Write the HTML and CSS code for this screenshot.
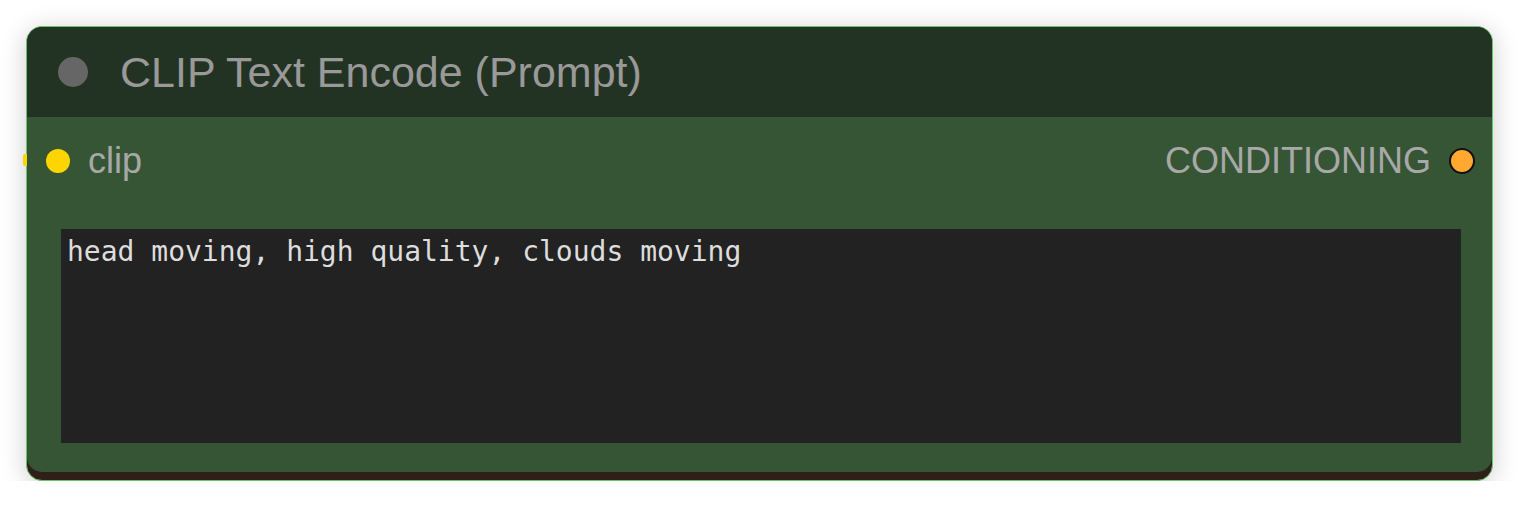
FILE: index.html
```html
<!DOCTYPE html>
<html>
<head>
<meta charset="utf-8">
<link rel="stylesheet" href="styles.css">
</head>
<body>
<div class="stage">
  <div class="node">
    <span class="link-stub"></span>
    <div class="node-inner">
      <div class="title-bar">
        <span class="title-dot"></span>
        <span class="title-text">CLIP Text Encode (Prompt)</span>
      </div>
      <div class="node-body">
        <div class="slot-row">
          <div class="slot slot-in">
            <span class="slot-dot dot-clip"></span>
            <span class="slot-label">clip</span>
          </div>
          <div class="slot slot-out">
            <span class="slot-label">CONDITIONING</span>
            <span class="slot-dot dot-cond"></span>
          </div>
        </div>
        <textarea class="prompt" spellcheck="false">head moving, high quality, clouds moving</textarea>
      </div>
    </div>
  </div>
</div>
</body>
</html>
```
FILE: styles.css
```css
* { box-sizing: border-box; }
html, body { margin: 0; padding: 0; background: #ffffff; }
.stage { padding: 26px 0 0 26px; }
.node {
  position: relative;
  width: 1467px;
  height: 455px;
  border: 1px solid #66c46a;
  border-radius: 16px;
  background: #2e2019;
  box-shadow: 0 4px 26px rgba(0,0,0,0.2);
}
.link-stub {
  position: absolute;
  left: -4px;
  top: 127px;
  width: 4px;
  height: 12px;
  border-radius: 2px 0 0 2px;
  background: #ffd500;
}
.node-inner {
  height: 445px;
  border-radius: 15px;
  overflow: hidden;
  display: flex;
  flex-direction: column;
  font-family: "Liberation Sans", Arial, sans-serif;
}
.title-bar {
  height: 90px;
  flex: none;
  background: #233323;
  display: flex;
  align-items: center;
  padding-left: 31px;
  gap: 32px;
}
.title-dot {
  width: 30px;
  height: 30px;
  border-radius: 50%;
  background: #666666;
  flex: none;
}
.title-text {
  font-size: 43px;
  color: #999999;
  line-height: 1;
}
.node-body {
  flex: 1;
  background: #355535;
  display: flex;
  flex-direction: column;
  padding: 0 31px 29px 34px;
}
.slot-row {
  height: 88px;
  display: flex;
  align-items: center;
  justify-content: space-between;
  margin: 0 -14px 0 -15px;
  flex: none;
}
.slot {
  display: flex;
  align-items: center;
  gap: 18px;
}
.slot-label {
  font-size: 36px;
  color: #a8a8a8;
  line-height: 1;
}
.slot-dot {
  border-radius: 50%;
  flex: none;
}
.dot-clip {
  width: 24px;
  height: 24px;
  background: #ffd500;
}
.dot-cond {
  width: 26px;
  height: 26px;
  background: #ffa931;
  border: 2px solid #111111;
}
.prompt {
  margin-top: 24px;
  height: 214px;
  width: 100%;
  flex: none;
  resize: none;
  border: none;
  outline: none;
  background: #222222;
  color: #dddddd;
  font-family: "DejaVu Sans Mono", "Liberation Mono", monospace;
  font-size: 28px;
  line-height: 1.2;
  padding: 6px 6px;
}
```
